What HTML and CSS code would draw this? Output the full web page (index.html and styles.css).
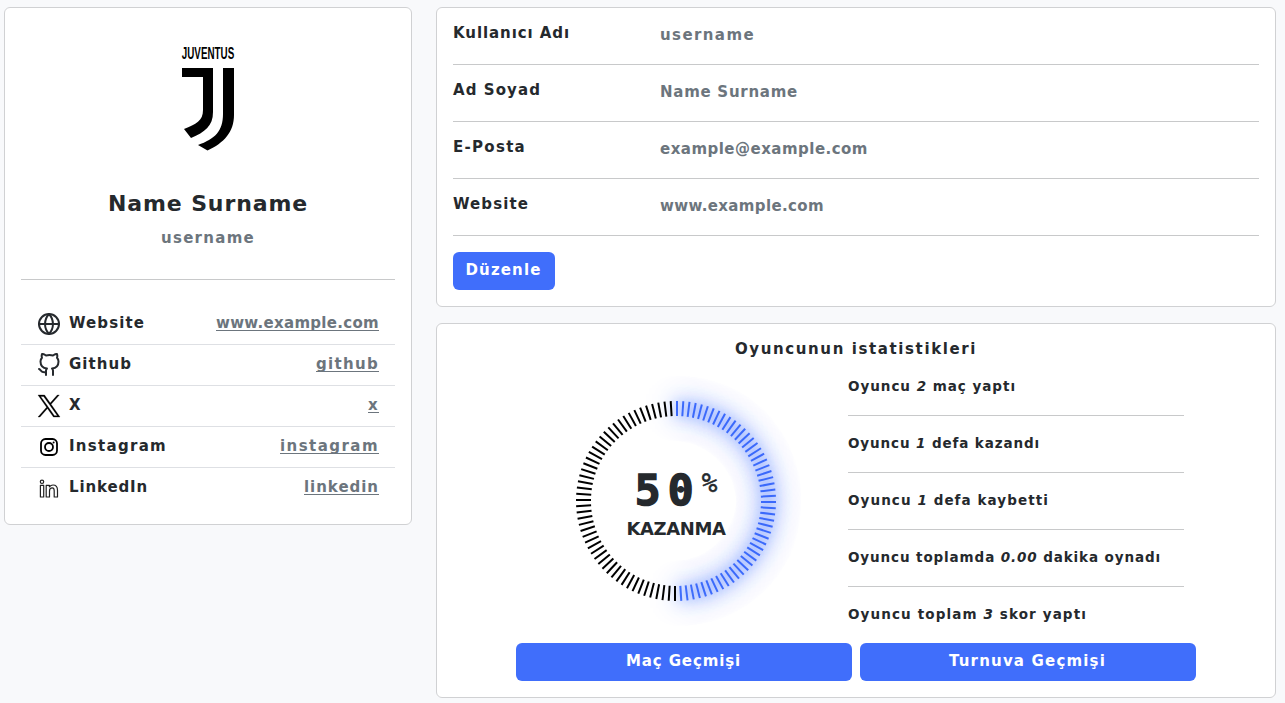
FILE: index.html
```html
<!DOCTYPE html>
<html lang="tr">
<head>
<meta charset="utf-8">
<title>Profil</title>
<link rel="stylesheet" href="styles.css">
</head>
<body>
<main class="page">
  <section class="card profile">
    <svg class="crest" width="60" height="114" viewBox="-3 -8 60 114">
      <text class="crest-name" x="0.8" y="12.600" textLength="52.400" lengthAdjust="spacingAndGlyphs">JUVENTUS</text>
      <path d="M1 22H32V66C32 80 24 86 10 92L3 83C15 78 22 75 22 64V31H1Z"/>
      <path d="M42 22H53V69C53 86 43 97 26.5 104.500L17 99C34 93 42 85 42 68Z"/>
    </svg>
    <h1 class="name"><span data-w="200">Name Surname</span></h1>
    <p class="handle"><span data-w="94">username</span></p>
    <hr class="rule">
    <ul class="links">
      <li><svg class="icon" viewBox="0 0 24 24"><g class="line"><circle cx="12" cy="12" r="10"/><path d="M2 12h20M12 2a15.300 15.300 0 0 1 4 10 15.300 15.300 0 0 1-4 10 15.300 15.300 0 0 1-4-10 15.300 15.300 0 0 1 4-10z"/></g></svg><span class="label"><span data-w="76">Website</span></span><a href="#" data-w="163">www.example.com</a></li>
      <li><svg class="icon" viewBox="0 0 24 24"><g class="line"><path d="M9 19c-5 1.500-5-2.500-7-3m14 6v-3.870a3.370 3.370 0 0 0-.94-2.610c3.140-.35 6.440-1.540 6.440-7A5.440 5.440 0 0 0 20 4.770 5.070 5.070 0 0 0 19.910 1S18.730.65 16 2.480a13.380 13.380 0 0 0-7 0C6.270.65 5.090 1 5.090 1A5.070 5.070 0 0 0 5 4.770a5.440 5.440 0 0 0-1.500 3.780c0 5.420 3.300 6.610 6.440 7A3.370 3.370 0 0 0 9 18.130V22"/></g></svg><span class="label"><span data-w="63">Github</span></span><a href="#" data-w="63">github</a></li>
      <li><svg class="icon" viewBox="0 0 24 24"><path class="brand-x" d="M14.095 10.316L22.286 1h-1.940l-7.115 8.088L7.551 1H1l8.589 12.231L1 23h1.940l7.510-8.543L16.449 23H23zM11.437 13.338l-.872-1.219L3.640 2.432h2.982l5.590 7.821.868 1.219 7.265 10.166h-2.982z"/></svg><span class="label"><span data-w="12">X</span></span><a href="#" data-w="11">x</a></li>
      <li><svg class="icon" viewBox="0 0 24 24"><g class="ink"><rect x="4" y="4" width="16" height="16" rx="4.500"/><circle cx="12" cy="12" r="4"/></g><circle cx="16.600" cy="7.500" r="1"/></svg><span class="label"><span data-w="98">Instagram</span></span><a href="#" data-w="99">instagram</a></li>
      <li><svg class="icon" viewBox="0 0 24 24"><g class="thin"><circle cx="5" cy="4.800" r="1.700"/><path d="M3.400 8.300h3.300v11.700H3.400zM9.200 8.300h3.200v1.500c1-1.300 2-1.800 3.600-1.800 3.200 0 4.500 1.900 4.500 5.200v6.800h-3.300v-6.300c0-1.900-.6-2.800-2-2.800-1.700 0-2.700 1-2.700 3v6.100H9.200z"/></g></svg><span class="label"><span data-w="79">LinkedIn</span></span><a href="#" data-w="75">linkedin</a></li>
    </ul>
  </section>

  <div class="main">
    <section class="card details">
      <dl>
        <div class="field"><dt><span data-w="117">Kullanıcı Adı</span></dt><dd><span data-w="95">username</span></dd></div>
        <div class="field"><dt><span data-w="88">Ad Soyad</span></dt><dd><span data-w="138">Name Surname</span></dd></div>
        <div class="field"><dt><span data-w="73">E-Posta</span></dt><dd><span data-w="208">example@example.com</span></dd></div>
        <div class="field"><dt><span data-w="76">Website</span></dt><dd><span data-w="164">www.example.com</span></dd></div>
      </dl>
      <button class="btn"><span data-w="76">Düzenle</span></button>
    </section>

    <section class="card stats">
      <h2 class="title"><span data-w="242">Oyuncunun istatistikleri</span></h2>
      <div class="overview">
        <div class="gauge" id="gauge">
          <div class="reading">
            <div class="percent"><span data-w="66">50</span><sup>%</sup></div>
            <div class="caption"><span data-w="99">KAZANMA</span></div>
          </div>
        </div>
        <ul class="facts">
          <li><span data-w="168">Oyuncu <em>2</em> maç yaptı</span></li>
          <li><span data-w="192">Oyuncu <em>1</em> defa kazandı</span></li>
          <li><span data-w="201">Oyuncu <em>1</em> defa kaybetti</span></li>
          <li><span data-w="313">Oyuncu toplamda <em>0.00</em> dakika oynadı</span></li>
          <li><span data-w="239">Oyuncu toplam <em>3</em> skor yaptı</span></li>
        </ul>
      </div>
      <div class="actions">
        <button class="btn"><span data-w="115">Maç Geçmişi</span></button>
        <button class="btn"><span data-w="157">Turnuva Geçmişi</span></button>
      </div>
    </section>
  </div>
</main>
<script src="app.js"></script>
</body>
</html>
```

FILE: styles.css
```css
* { box-sizing: border-box; }
body {
  margin: 0;
  background: #f8f9fb;
  color: #25292d;
  font: bold 15px/24px "DejaVu Sans", sans-serif;
}
ul, dl, dd, h1, h2, p { margin: 0; padding: 0; list-style: none; }
[data-w] { white-space: nowrap; }

.page {
  display: grid;
  grid-template-columns: 408px 840px;
  gap: 24px;
  align-items: start;
  padding: 7px 0 0 4px;
}
.main { display: grid; gap: 16px; }
.card {
  background: #fff;
  border: 1px solid #d0d1d3;
  border-radius: 6px;
  padding: 16px;
}

/* Profile card */
.profile { height: 518px; }
.crest { display: block; margin: 14px auto 0; }
.crest-name { font: bold 16px "Liberation Sans", sans-serif; fill: #000; }
.name { margin-top: 37px; font-size: 22px; line-height: 30px; text-align: center; }
.handle { margin-top: 7px; text-align: center; color: #6c757d; }
.rule { height: 1px; margin: 29px 0 24px; border: 0; background: #c8c9ca; }
.links li {
  display: flex;
  align-items: center;
  height: 41px;
  padding: 0 16px;
  border-bottom: 1px solid #dee0e4;
}
.links li:last-child { border-bottom: 0; }
.icon { width: 24px; height: 24px; margin-right: 8px; }
.line, .ink, .thin { fill: none; stroke-linecap: round; stroke-linejoin: round; }
.line { stroke: #25292d; stroke-width: 2; }
.ink { stroke: #000; stroke-width: 1.8; }
.thin { stroke: #222; stroke-width: 1.2; }
.brand-x { stroke: #000; stroke-width: 0.3; }
.label { flex: 1; padding-bottom: 3px; }
.links a {
  padding-bottom: 3px;
  color: #6c757d;
  text-decoration: underline;
  text-decoration-thickness: 1px;
  text-underline-offset: 2px;
  text-decoration-skip-ink: none;
}

/* Account fields */
.field {
  display: grid;
  grid-template-columns: 207px 1fr;
  height: 41px;
  margin-bottom: 16px;
  border-bottom: 1px solid #c8c9ca;
}
.field dt { line-height: 18px; }
.field dd { line-height: 22px; color: #6c757d; }
.btn {
  display: block;
  height: 38px;
  padding: 0 13px 2px 12px;
  border: 0;
  border-radius: 6px;
  background: #406efb;
  color: #fff;
  font: inherit;
}
.details .btn { width: 102px; }

/* Player statistics */
.title { font-size: 15px; line-height: 18px; text-align: center; }
.overview {
  display: grid;
  grid-template-columns: 200px 336px;
  gap: 72px;
  padding: 17px 0 16px 123px;
}
.gauge {
  position: relative;
  display: grid;
  place-items: center;
  width: 200px;
  height: 200px;
  margin-top: 26px;
}
/* Each tick turns around the centre of the dial. */
.tick {
  position: absolute;
  left: 100px;
  top: 0;
  width: 2px;
  height: 15px;
  background: #000;
  transform-origin: 0 100px;
}
.tick.on { background: #406efb; box-shadow: 0 0 15px #406efb, 0 0 30px #406efb; }
.reading { position: relative; z-index: 1; padding-top: 7px; text-align: center; }
.percent {
  display: flex;
  justify-content: center;
  font: bold 43px/46px "DejaVu Sans Mono", monospace;
  -webkit-text-stroke: 1.5px #25292d;
}
.percent sup {
  margin-left: 1px;
  font-size: 26px;
  font-weight: normal;
  line-height: 32px;
  -webkit-text-stroke: 0.5px #25292d;
}
.caption { font-size: 18px; line-height: 26px; padding-top: 3px; }
.facts { font-size: 13.500px; }
.facts li { height: 41px; margin-bottom: 16px; border-bottom: 1px solid #c8c9ca; line-height: 23px; }
.facts li:last-child { height: 24px; margin: 0; border: 0; }
.actions { display: grid; grid-template-columns: 336px 336px; gap: 8px; padding-left: 63px; }
```

FILE: app.js
```js
document.querySelectorAll('[data-w]').forEach(el => {
  const range = document.createRange();
  range.selectNodeContents(el);
  const natural = range.getBoundingClientRect().width;
  el.style.letterSpacing = (el.dataset.w - natural) / el.textContent.length + 'px';
});

// Dial of one hundred ticks, lit up to the win rate.
const gauge = document.getElementById('gauge');
for (let i = 0; i < 100; i++) {
  const tick = document.createElement('i');
  tick.className = i < 50 ? 'tick on' : 'tick';
  tick.style.transform = `rotate(${i * 3.6}deg)`;
  gauge.append(tick);
}
```
